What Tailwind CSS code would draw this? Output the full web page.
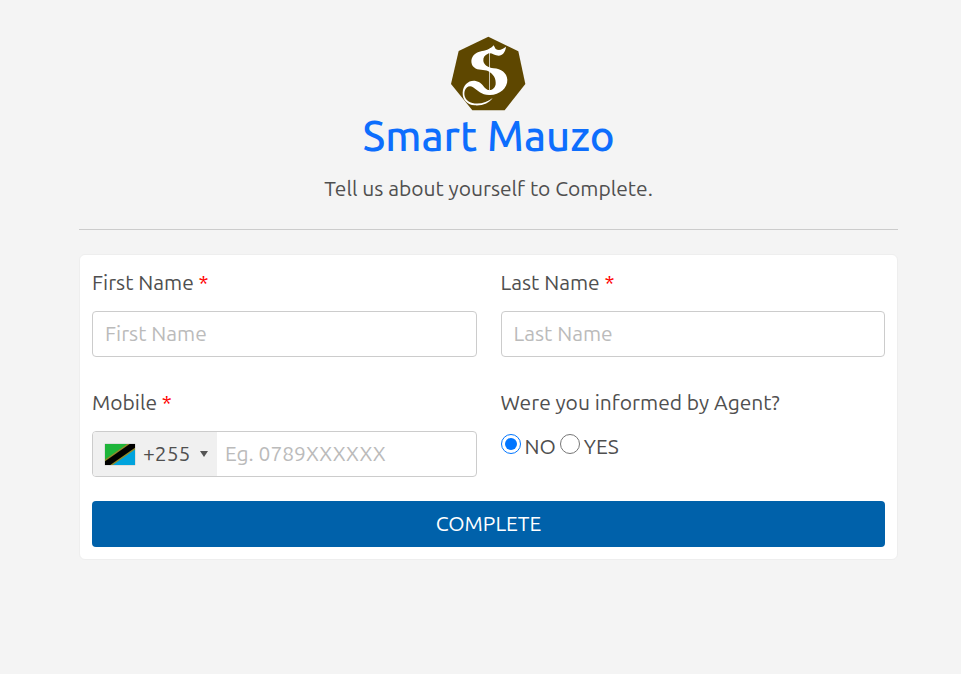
<!DOCTYPE html>
<html lang="en">
<head>
<meta charset="utf-8">
<meta name="viewport" content="width=device-width, initial-scale=1">
<title>Smart Mauzo</title>
<script src="https://cdn.jsdelivr.net/npm/@tailwindcss/browser@4"></script>
</head>
<body class="min-h-screen bg-[#f4f4f4] font-['Ubuntu','Noto_Sans',sans-serif] text-[21px] leading-[30px] text-[#4f4f4f]">
<main class="pl-[79px] pr-[63px] pt-9">
  <header class="flex flex-col items-center border-b border-[#cccccc] pb-[26px] text-center">
    <svg class="h-[76px] w-[76px]" viewBox="34 24 228 228" role="img" aria-label="Smart Mauzo logo">
      <path fill="#5e4700" d="M146 26 236 70 257 168 195 247H98L34 168 57 69Z"/>
      <g fill="#fff">
        <path d="M199 56C198 71 188 83 177 83C164 83 155 73 145 77C135 81 130 88 131 99C133 111 146 119 162 121C184 122 202 135 203 155C204 180 180 200 151 201C125 202 115 188 100 178C90 171 79 177 75 189C71 206 80 220 98 225C119 230 143 223 159 210C150 225 127 234 105 232C83 230 68 216 69 194C70 171 87 156 108 159C122 161 129 172 137 181C148 192 165 186 168 169C170 151 161 138 145 129C134 124 115 129 103 118C91 107 93 86 107 77C119 69 136 69 147 63C155 60 158 56 162 52L168 63C179 70 188 64 199 56Z"/>
        <path d="M148 70H151V196H148Z" fill-opacity=".7"/>
      </g>
    </svg>
    <h1 class="text-[42px] leading-[48px] font-medium text-[#0d6efd]">Smart Mauzo</h1>
    <p class="mt-[13px]">Tell us about yourself to Complete.</p>
  </header>
  <form class="mt-6 grid grid-cols-2 gap-x-6 gap-y-6 rounded-md border border-[#eeeeee] bg-white p-3">
    <div class="pb-1.5">
      <label for="first" class="block">First Name <span class="text-[#ff0000]">*</span></label>
      <input id="first" type="text" placeholder="First Name" class="mt-3.5 block h-[46px] w-full rounded border border-[#cccccc] bg-white px-3 pb-0.5 placeholder:text-[#bbbbbb]">
    </div>
    <div class="pb-1.5">
      <label for="last" class="block">Last Name <span class="text-[#ff0000]">*</span></label>
      <input id="last" type="text" placeholder="Last Name" class="mt-3.5 block h-[46px] w-full rounded border border-[#cccccc] bg-white px-3 pb-0.5 placeholder:text-[#bbbbbb]">
    </div>
    <div>
      <label for="mobile" class="block">Mobile <span class="text-[#ff0000]">*</span></label>
      <div class="mt-3.5 flex h-[46px] overflow-hidden rounded border border-[#cccccc] bg-white">
        <button type="button" aria-label="Country code +255, Tanzania" class="flex w-[124px] shrink-0 items-center bg-[#f0f0f0] pl-3">
          <svg class="h-[21px] w-[30px] shrink-0 shadow-[0_0_1px_#888888]" viewBox="0 0 30 21" preserveAspectRatio="none" aria-hidden="true">
            <path fill="#1eb53a" d="M0 0H30V21H0Z"/>
            <path fill="#00a3dd" d="M30 0V21H0Z"/>
            <path stroke="#8f8a2a" stroke-width="9" d="M-4 23.8 34 -2.8"/>
            <path stroke="#000" stroke-width="6" d="M-4 23.8 34 -2.8"/>
          </svg>
          <span class="ml-2 pb-0.5">+255</span>
          <svg class="ml-2.5 h-[6px] w-2 shrink-0" viewBox="0 0 8 6" aria-hidden="true"><path fill="#555" d="M0 0H8L4 6Z"/></svg>
        </button>
        <input id="mobile" type="tel" placeholder="Eg. 0789XXXXXX" class="min-w-0 flex-1 px-2 pb-0.5 placeholder:text-[#bbbbbb]">
      </div>
    </div>
    <fieldset>
      <legend>Were you informed by Agent?</legend>
      <div class="mt-3.5 flex gap-1">
        <label class="flex gap-1"><input type="radio" name="agent" value="no" checked class="mt-[3px] h-5 w-5 accent-[#0075ff]">NO</label>
        <label class="flex gap-1"><input type="radio" name="agent" value="yes" class="mt-[3px] h-5 w-5 accent-[#0075ff]">YES</label>
      </div>
    </fieldset>
    <button type="submit" class="col-span-2 h-[46px] rounded bg-[#0061aa] pb-0.5 text-white">COMPLETE</button>
  </form>
</main>
</body>
</html>
